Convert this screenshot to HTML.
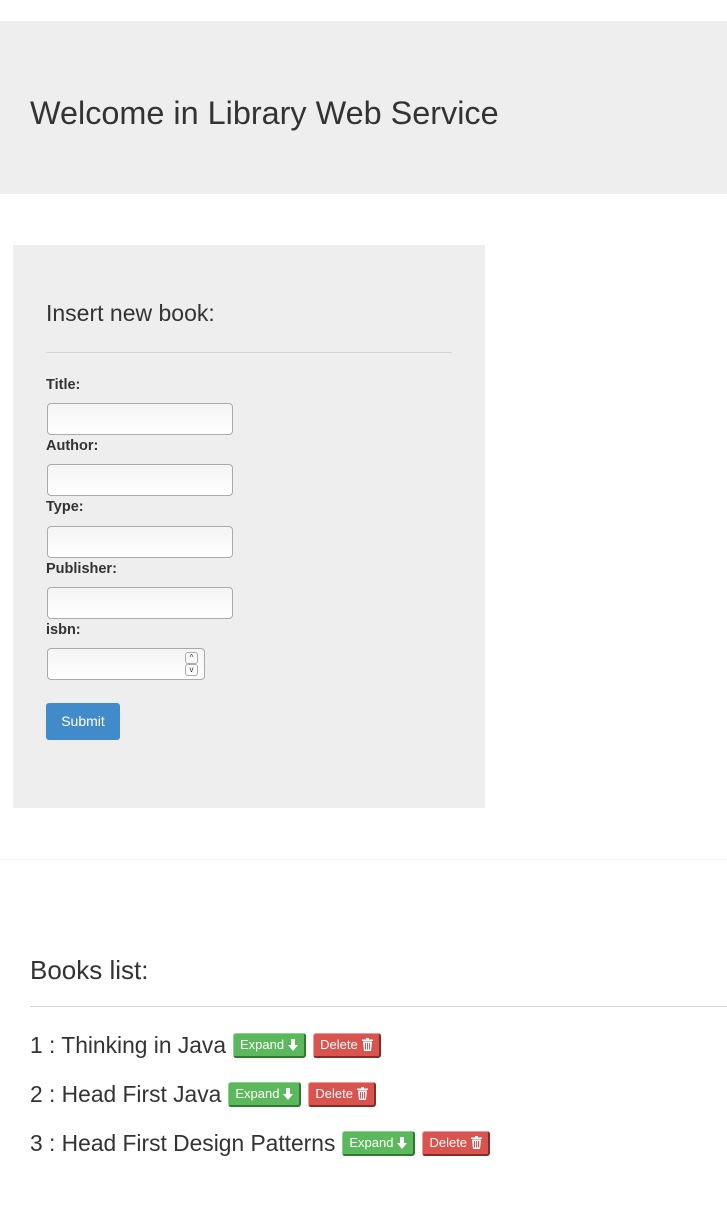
<!DOCTYPE html>
<html><head><style>
body{margin:0;background:#fff;font-family:"Liberation Sans",sans-serif;color:#333;width:727px;height:1208px;position:relative;overflow:hidden}
.a{position:absolute}
.jum{left:0;top:21px;width:727px;height:173px;background:#eee}
.jum h1{position:absolute;left:30px;top:72px;margin:0;font-weight:400;font-size:32.4px;line-height:40px}
.panel{left:13px;top:245px;width:472px;height:563px;background:#eee}
.lbl{font-weight:bold;font-size:14.5px;left:46px}
.inp{left:47px;width:184px;height:30px;border:1px solid #aaa;border-radius:4px;background:linear-gradient(#f4f4f4,#fff)}
.btn{font-size:13px;color:#fff;border-radius:3px;height:25px;line-height:22px;padding:0 6px;box-sizing:border-box;display:inline-flex;align-items:center;gap:4px}
.g{background:#5cb85c;border:1px solid #8fd08f;border-right:2px solid #2f7a2f;border-bottom:2px solid #2f7a2f}
.r{background:#d9534f;border:1px solid #e99;border-right:2px solid #8a2a27;border-bottom:2px solid #8a2a27}
.item{left:30px;font-size:22.8px;height:26px;line-height:26px;display:flex;align-items:center;white-space:nowrap}
.item .btn{margin-left:7px}
</style></head><body>
<div class="a jum"><h1>Welcome in Library Web Service</h1></div>
<div class="a panel"></div>
<div class="a" style="left:46px;top:300px;font-size:23px">Insert new book:</div>
<div class="a" style="left:46px;top:352px;width:406px;height:1px;background:#d5d5d5"></div>
<div class="a lbl" style="top:377px">Title:</div>
<div class="a inp" style="top:403px"></div>
<div class="a lbl" style="top:438px">Author:</div>
<div class="a inp" style="top:464px"></div>
<div class="a lbl" style="top:499px">Type:</div>
<div class="a inp" style="top:526px"></div>
<div class="a lbl" style="top:561px">Publisher:</div>
<div class="a inp" style="top:587px"></div>
<div class="a lbl" style="top:622px">isbn:</div>
<div class="a inp" style="top:648px;width:156px"></div>
<div class="a" style="left:185px;top:652px;width:11px;height:10px;border:1px solid #aaa;border-radius:3px;font-size:8px;line-height:9px;text-align:center">^</div>
<div class="a" style="left:185px;top:664px;width:11px;height:10px;border:1px solid #aaa;border-radius:3px;font-size:8px;line-height:9px;text-align:center">v</div>
<div class="a" style="left:46px;top:703px;width:74px;height:37px;background:#428bca;border-radius:3px;color:#fff;font-size:14px;line-height:37px;text-align:center">Submit</div>
<div class="a" style="left:0;top:859px;width:727px;height:1px;background:#f4f4f4"></div>
<div class="a" style="left:30px;top:955px;font-size:26px">Books list:</div>
<div class="a" style="left:30px;top:1006px;width:697px;height:1px;background:#d5d5d5"></div>
<div class="a item" style="top:1032px">1 : Thinking in Java<span class="btn g">Expand <svg width="10" height="12" viewBox="0 0 10 12"><path d="M3 0h4v6h3l-5 6-5-6h3z" fill="#fff"/></svg></span><span class="btn r">Delete <svg width="11" height="13" viewBox="0 0 11 13"><path d="M0 1.5h11v1.5H0zM4 0h3v1.5H4zM1 3.5h9l-1 9.5H2z M3 5v6.5h1V5z M5 5v6.5h1V5z M7 5v6.5h1V5z" fill="#fff" fill-rule="evenodd"/></svg></span></div>
<div class="a item" style="top:1081px">2 : Head First Java<span class="btn g">Expand <svg width="10" height="12" viewBox="0 0 10 12"><path d="M3 0h4v6h3l-5 6-5-6h3z" fill="#fff"/></svg></span><span class="btn r">Delete <svg width="11" height="13" viewBox="0 0 11 13"><path d="M0 1.5h11v1.5H0zM4 0h3v1.5H4zM1 3.5h9l-1 9.5H2z M3 5v6.5h1V5z M5 5v6.5h1V5z M7 5v6.5h1V5z" fill="#fff" fill-rule="evenodd"/></svg></span></div>
<div class="a item" style="top:1130px">3 : Head First Design Patterns<span class="btn g">Expand <svg width="10" height="12" viewBox="0 0 10 12"><path d="M3 0h4v6h3l-5 6-5-6h3z" fill="#fff"/></svg></span><span class="btn r">Delete <svg width="11" height="13" viewBox="0 0 11 13"><path d="M0 1.5h11v1.5H0zM4 0h3v1.5H4zM1 3.5h9l-1 9.5H2z M3 5v6.5h1V5z M5 5v6.5h1V5z M7 5v6.5h1V5z" fill="#fff" fill-rule="evenodd"/></svg></span></div>
</body></html>
